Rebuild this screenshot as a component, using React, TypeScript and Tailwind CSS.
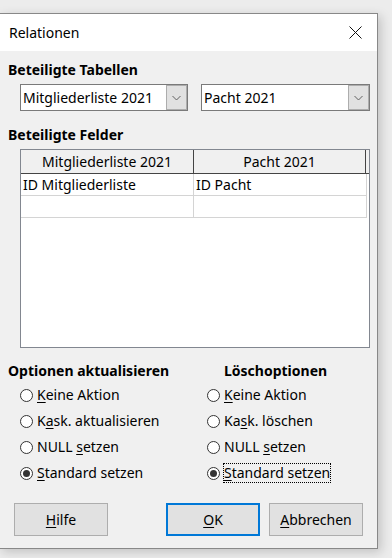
import React from 'react';

const FONT = { fontFamily: '"Noto Sans", "Open Sans", sans-serif' };

function Combo(props: { label: string; width: string }) {
  return (
    <div className={`flex h-[27px] ${props.width} border border-[#7a7a7a] bg-white`}>
      <div className="flex flex-1 items-center pl-[2px] text-[14px] text-black">{props.label}</div>
      <div className="flex w-[21px] items-center justify-center border border-[#adadad] bg-[#e1e1e1]">
        <svg width="9" height="6" viewBox="0 0 9 6">
          <path d="M0.5 1 L4.5 5 L8.5 1" fill="none" stroke="#606060" strokeWidth="1" />
        </svg>
      </div>
    </div>
  );
}

function Radio(props: { checked?: boolean; label: React.ReactNode; focus?: boolean }) {
  return (
    <div className="flex h-[26px] items-center gap-[4px]">
      <span className="flex h-[13px] w-[13px] items-center justify-center rounded-full border border-[#333] bg-white">
        {props.checked && <span className="h-[7px] w-[7px] rounded-full bg-[#333]" />}
      </span>
      <span
        className={`text-[14px] leading-[18px] text-black ${props.focus ? 'outline outline-1 outline-dotted outline-black' : ''}`}
      >
        {props.label}
      </span>
    </div>
  );
}

function U(props: { children: React.ReactNode }) {
  return <span className="underline decoration-1 underline-offset-2">{props.children}</span>;
}

function Btn(props: { children: React.ReactNode; primary?: boolean }) {
  return (
    <div
      className={`flex h-[33px] w-[94px] items-center justify-center bg-[#e1e1e1] text-[14px] text-black ${
        props.primary ? 'border-2 border-[#0078d7]' : 'border border-[#adadad]'
      }`}
    >
      {props.children}
    </div>
  );
}

export default function App() {
  return (
    <div className="h-[558px] w-[392px] overflow-hidden bg-[#ececec] pt-[13px]" style={FONT}>
      <div className="-ml-px flex h-[536px] w-[379px] flex-col border border-[#888] bg-[#f0f0f0] shadow-[3px_3px_10px_rgba(0,0,0,0.18)]">
        {/* title bar */}
        <div className="flex h-[37px] items-center justify-between bg-white pl-[9px] pr-[15px]">
          <span className="text-[14px] text-black">Relationen</span>
          <svg width="13" height="13" viewBox="0 0 13 13">
            <path d="M0.5 0.5 L12.5 12.5 M12.5 0.5 L0.5 12.5" stroke="#111" strokeWidth="1" />
          </svg>
        </div>

        <div className="flex flex-1 flex-col pl-[8px]">
          <div className="mt-[9px] text-[14px] font-bold leading-[19px] text-black">Beteiligte Tabellen</div>
          <div className="mt-[5px] flex gap-[13px] pl-[12px]">
            <Combo label="Mitgliederliste 2021" width="w-[168px]" />
            <Combo label="Pacht 2021" width="w-[169px]" />
          </div>

          <div className="mt-[14px] text-[14px] font-bold leading-[19px] text-black">Beteiligte Felder</div>
          <div className="ml-[12px] mt-[5px] h-[199px] w-[350px] border border-[#828790] bg-white">
            <div className="flex h-[24px] border-b border-[#444] bg-[#f0f0f0] text-[14px] text-black">
              <div className="flex w-[173px] items-center justify-center border-r border-[#444]">Mitgliederliste 2021</div>
              <div className="flex w-[172px] items-center justify-center border-r border-[#444]">Pacht 2021</div>
            </div>
            <div className="flex h-[22px] w-[346px] border-b border-[#d4d4d4] text-[14px] text-black">
              <div className="flex w-[173px] items-center border-r border-[#d4d4d4] pl-[2px]">ID Mitgliederliste</div>
              <div className="flex flex-1 items-center border-r border-[#d4d4d4] pl-[2px]">ID Pacht</div>
            </div>
            <div className="flex h-[22px] w-[346px] border-b border-[#d4d4d4]">
              <div className="w-[173px] border-r border-[#d4d4d4]" />
              <div className="flex-1 border-r border-[#d4d4d4]" />
            </div>
          </div>

          <div className="mt-[13px] flex">
            <div className="w-[199px]">
              <div className="text-[14px] font-bold leading-[19px] text-black">Optionen aktualisieren</div>
              <div className="mt-[2px] pl-[12px]">
                <Radio label={<><U>K</U>eine Aktion</>} />
                <Radio label={<>K<U>a</U>sk. aktualisieren</>} />
                <Radio label={<>NULL <U>s</U>etzen</>} />
                <Radio checked label={<><U>S</U>tandard setzen</>} />
              </div>
            </div>
            <div>
              <div className="pl-[17px] text-[14px] font-bold leading-[19px] text-black">Löschoptionen</div>
              <div className="mt-[2px]">
                <Radio label={<><U>K</U>eine Aktion</>} />
                <Radio label={<>Ka<U>s</U>k. löschen</>} />
                <Radio label={<>NULL <U>s</U>etzen</>} />
                <Radio checked focus label={<><U>S</U>tandard setzen</>} />
              </div>
            </div>
          </div>

          <div className="mt-[17px] flex pl-[6px]">
            <Btn>
              <U>H</U>ilfe
            </Btn>
            <div className="ml-[58px] flex gap-[9px]">
              <Btn primary>
                <U>O</U>K
              </Btn>
              <Btn>
                <U>A</U>bbrechen
              </Btn>
            </div>
          </div>
        </div>
      </div>
    </div>
  );
}
